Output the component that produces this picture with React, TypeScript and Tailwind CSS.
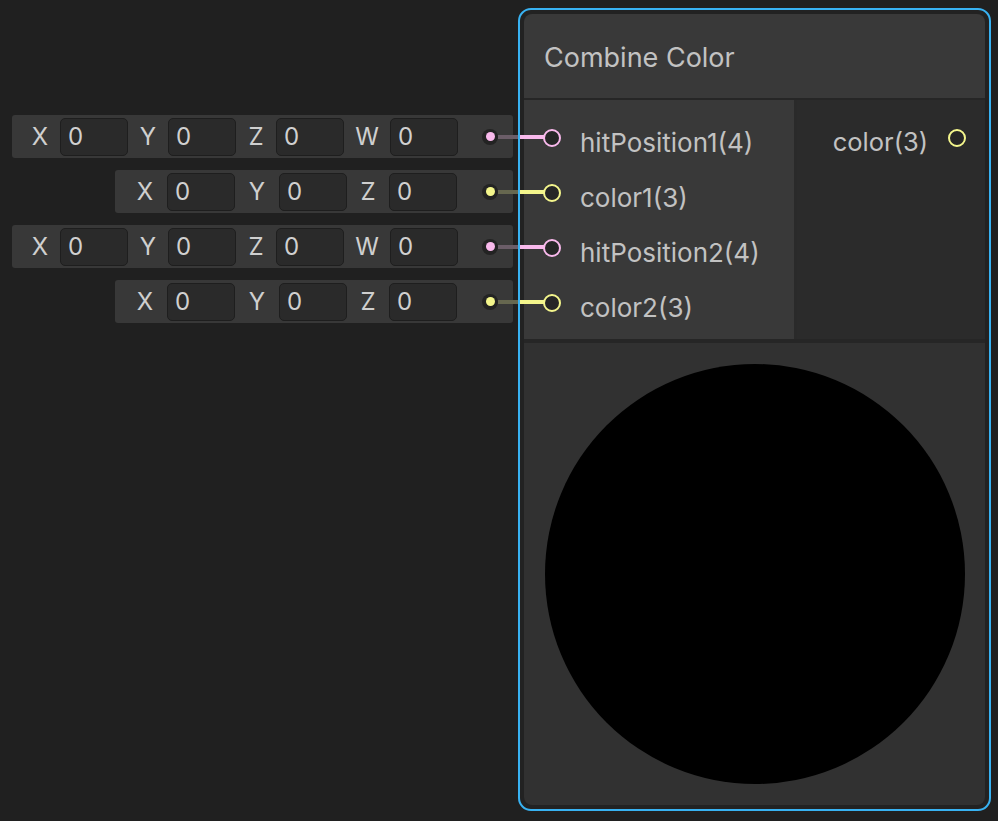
import React from "react";

type Comp = { label: string; lw: number };

function Field({ lw, label }: Comp) {
  return (
    <>
      <div className="flex items-center justify-center text-[24px] text-[#cfcfcf]" style={{ width: lw }}>
        {label}
      </div>
      <div className="w-[68px] h-[38px] rounded-[5px] bg-[#2a2a2a] border border-[#1e1e1e] flex items-center pl-[7px] text-[24px] text-[#d0d0d0]">
        0
      </div>
    </>
  );
}

function InputRow({
  top,
  left,
  comps,
  dotMl,
  color,
}: {
  top: number;
  left: number;
  comps: Comp[];
  dotMl: number;
  color: "pink" | "yellow";
}) {
  return (
    <div
      className="absolute h-[43px] bg-[#383838] rounded-[3px] flex items-center pl-[8px]"
      style={{ top, left, width: 513 - left }}
    >
      {comps.map((c) => (
        <Field key={c.label} {...c} />
      ))}
      <div
        className="w-4 h-4 rounded-full bg-[#232323] flex items-center justify-center"
        style={{ marginLeft: dotMl }}
      >
        <div className={color === "pink" ? "w-[9px] h-[9px] rounded-full bg-[#f9b9ec]" : "w-[9px] h-[9px] rounded-full bg-[#f4f68c]"} />
      </div>
    </div>
  );
}

function Connector({ cy, color }: { cy: number; color: "pink" | "yellow" }) {
  return (
    <>
      <div
        className={color === "pink" ? "absolute h-[4px] bg-[#6b5d68] z-10" : "absolute h-[4px] bg-[#66674f] z-10"}
        style={{ left: 498, width: 20, top: cy - 2 }}
      />
      <div
        className={color === "pink" ? "absolute h-[4px] bg-[#f9b9ec] z-10" : "absolute h-[4px] bg-[#f4f68c] z-10"}
        style={{ left: 520, width: 24, top: cy - 2 }}
      />
    </>
  );
}

function Port({ label, color }: { label: string; color: "pink" | "yellow" }) {
  return (
    <div className="h-[55px] flex items-center pl-[19px]">
      <div
        className={
          color === "pink"
            ? "w-[18px] h-[18px] rounded-full border-2 border-[#f9b9ec] bg-[#262626]"
            : "w-[18px] h-[18px] rounded-full border-2 border-[#f4f68c] bg-[#262626]"
        }
      />
      <div className="ml-[19px] text-[26px] text-[#c2c2c2] translate-y-[5px]">{label}</div>
    </div>
  );
}

export default function App() {
  const row1: Comp[] = [
    { label: "X", lw: 40 },
    { label: "Y", lw: 40 },
    { label: "Z", lw: 40 },
    { label: "W", lw: 46 },
  ];
  const row2: Comp[] = [
    { label: "X", lw: 44 },
    { label: "Y", lw: 44 },
    { label: "Z", lw: 42 },
  ];
  return (
    <div
      className="relative w-[998px] h-[821px] bg-[#202020] overflow-hidden"
      style={{ fontFamily: "Inter, 'Noto Sans', sans-serif" }}
    >
      <InputRow top={115} left={12} comps={row1} dotMl={24} color="pink" />
      <InputRow top={170} left={115} comps={row2} dotMl={25} color="yellow" />
      <InputRow top={225} left={12} comps={row1} dotMl={24} color="pink" />
      <InputRow top={280} left={115} comps={row2} dotMl={25} color="yellow" />

      <Connector cy={137} color="pink" />
      <Connector cy={192} color="yellow" />
      <Connector cy={247} color="pink" />
      <Connector cy={302} color="yellow" />

      {/* Node */}
      <div className="absolute left-[518px] top-[8px] w-[473px] h-[803px] rounded-[13px] border-2 border-[#38b2f2] p-[4px] bg-[#222222]">
        <div className="w-full h-full rounded-[8px] overflow-hidden flex flex-col">
          <div className="h-[84px] bg-[#393939] flex items-center pl-[20px] text-[27px] text-[#c2c2c2]">
            <span className="translate-y-[2px]">Combine Color</span>
          </div>
          <div className="h-[2px] bg-[#262626]" />
          <div className="h-[239px] flex">
            <div className="w-[270px] bg-[#393939] pt-[10px]">
              <Port label="hitPosition1(4)" color="pink" />
              <Port label="color1(3)" color="yellow" />
              <Port label="hitPosition2(4)" color="pink" />
              <Port label="color2(3)" color="yellow" />
            </div>
            <div className="w-[3px] bg-[#2a2a2a]" />
            <div className="flex-1 bg-[#2b2b2b] pt-[10px]">
              <div className="h-[55px] flex items-center justify-end pr-[19px]">
                <div className="text-[25.5px] text-[#c2c2c2] translate-y-[5px]">color(3)</div>
                <div className="ml-[20px] w-[18px] h-[18px] rounded-full border-2 border-[#f4f68c] bg-[#262626]" />
              </div>
            </div>
          </div>
          <div className="h-[4px] bg-[#262626]" />
          <div className="flex-1 bg-[#313131] flex items-center justify-center">
            <div className="w-[420px] h-[420px] rounded-full bg-black" />
          </div>
        </div>
      </div>
    </div>
  );
}
